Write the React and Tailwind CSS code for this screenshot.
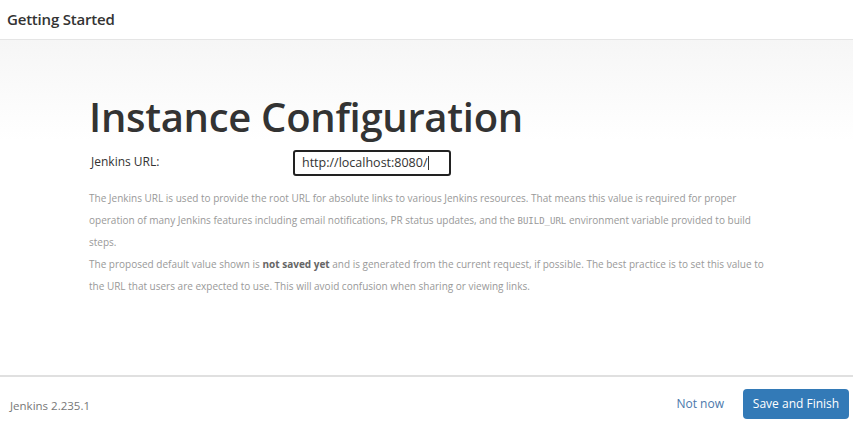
export default function App() {
  const font = { fontFamily: '"Open Sans", "Noto Sans", sans-serif' };
  return (
    <div className="w-[853px] h-[423px] flex flex-col bg-white text-[#333]" style={font}>
      <header className="h-[40px] shrink-0 flex items-center px-[7px] border-b border-[#e5e5e5]">
        <h1 className="text-[15px] font-semibold text-[#333] tracking-[-0.2px]">Getting Started</h1>
      </header>
      <main className="flex-1 bg-gradient-to-b from-[#f6f6f6] to-white to-[30%] pl-[89px] pr-[78px] pt-[52px]">
        <h2 className="text-[40px] leading-[50px] font-semibold text-[#333] tracking-[-0.3px]">Instance Configuration</h2>
        <div className="flex items-start mt-[8px]">
          <label className="w-[204px] text-[12px] text-[#333] pl-[2px] pt-[3px]">Jenkins URL:</label>
          <div className="w-[158px] h-[26px] border-2 border-[#222] rounded-[3px] bg-white flex items-center px-[7px] text-[12.5px] text-[#333]">
            http://localhost:8080/<span className="inline-block w-px h-[14px] bg-[#333]"></span>
          </div>
        </div>
        <div className="mt-[11px] text-[10px] leading-[22px] text-[#999]">
          <p>
            The Jenkins URL is used to provide the root URL for absolute links to various Jenkins resources. That means this value is required for proper operation of many Jenkins features including email notifications, PR status updates, and the <code className="text-[9px] leading-none" style={{ fontFamily: '"DejaVu Sans Mono", monospace' }}>BUILD_URL</code> environment variable provided to build steps.
          </p>
          <p>
            The proposed default value shown is <strong className="font-bold text-[#666]">not saved yet</strong> and is generated from the current request, if possible. The best practice is to set this value to the URL that users are expected to use. This will avoid confusion when sharing or viewing links.
          </p>
        </div>
      </main>
      <footer className="h-[48px] shrink-0 border-t-2 border-[#e0e0e0] flex items-center justify-between pl-[10px] pr-[4px]">
        <span className="text-[11.5px] text-[#777] mt-[12px]">Jenkins 2.235.1</span>
        <div className="flex items-center gap-[19px] mt-[8px]">
          <a className="text-[12px] text-[#4b78ab]">Not now</a>
          <button className="h-[30px] w-[106px] rounded-[4px] bg-[#337ab7] text-white text-[12px]">Save and Finish</button>
        </div>
      </footer>
    </div>
  );
}
